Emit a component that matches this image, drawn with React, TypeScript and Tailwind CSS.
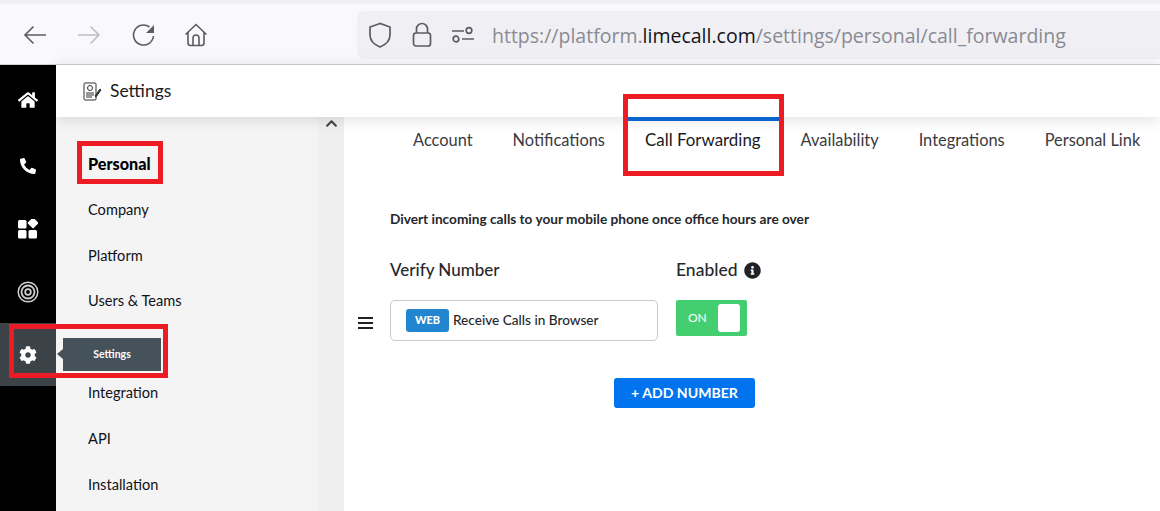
import { FaChevronUp, FaCog, FaHome, FaInfoCircle, FaPhoneAlt } from 'react-icons/fa';

const sideItems = ['Personal', 'Company', 'Platform', 'Users & Teams', '', 'Integration', 'API', 'Installation'];
const tabs = ['Account', 'Notifications', 'Call Forwarding', 'Availability', 'Integrations', 'Personal Link'];

function BrowserBar() {
  return (
    <div className="h-[65px] shrink-0 flex flex-col">
      <div className="h-1 shrink-0 bg-[#f0f0f2]" />
      <div className="flex-1 bg-[#f9f9fb] border-b border-[#cfcfd3] flex items-center">
        <div className="flex items-center pl-[23px] w-[357px] mt-[1px] text-[#5b5b66]">
          <svg width="24" height="24" viewBox="0 0 24 24" fill="none" stroke="currentColor" strokeWidth="1.6">
            <path d="M23 12H2M10.5 3.5 2 12l8.5 8.5" />
          </svg>
          <svg width="24" height="24" viewBox="0 0 24 24" fill="none" stroke="#bdbdc3" strokeWidth="1.6" className="ml-[30px]">
            <path d="M1 12h21M13.5 3.5 22 12l-8.5 8.5" />
          </svg>
          <svg width="24" height="24" viewBox="0 0 24 24" fill="none" stroke="currentColor" strokeWidth="1.6" className="ml-[31px]">
            <path d="M21.5 13a10 10 0 1 1-4-9" />
            <path d="M22 2v8h-8z" fill="currentColor" stroke="none" />
          </svg>
          <svg width="24" height="24" viewBox="0 0 24 24" fill="none" stroke="currentColor" strokeWidth="1.6" className="ml-[28px]">
            <path d="M1.5 11.5 12 1.5l10.5 10M4 9.5V20a2.5 2.5 0 0 0 2.5 2.5h11A2.5 2.5 0 0 0 20 20V9.5" />
            <path d="M9 22.5V15a3 3 0 0 1 6 0v7.5" />
          </svg>
        </div>
        <div className="flex-1 h-12 mt-[1px] bg-[#f0f0f4] rounded-l-lg flex items-center pl-[11px] text-[#5b5b66]">
          <svg width="24" height="26" viewBox="0 0 24 26" fill="none" stroke="currentColor" strokeWidth="1.7">
            <path d="M12 1.5 2 5v8c0 6 5 10 10 12 5-2 10-6 10-12V5z" />
          </svg>
          <svg width="20" height="26" viewBox="0 0 20 26" fill="none" stroke="currentColor" strokeWidth="1.7" className="ml-[20px]">
            <rect x="1.5" y="11" width="17" height="13" rx="2.5" />
            <path d="M4.5 11V7a5.5 5.5 0 0 1 11 0v4" />
          </svg>
          <svg width="22" height="18" viewBox="0 0 22 18" fill="none" stroke="currentColor" strokeWidth="1.7" className="ml-[20px]">
            <path d="M0 5h12M10 13h12" />
            <circle cx="17" cy="4.5" r="2.8" />
            <circle cx="4" cy="13" r="2.8" />
          </svg>
          <div className="ml-[18px] mt-[2px] text-[19.5px] font-['Open_Sans',sans-serif] text-[#8a8a92] whitespace-nowrap">
            https://platform.<span className="text-[#15141a]">limecall.com</span>/settings/personal/call_forwarding
          </div>
        </div>
      </div>
    </div>
  );
}

function Rail() {
  return (
    <div className="w-14 shrink-0 bg-black flex flex-col text-white">
      <div className="h-[70px] flex items-center justify-center">
        <FaHome className="text-[20px]" />
      </div>
      <div className="h-[62px] flex items-center justify-center">
        <FaPhoneAlt className="text-[16px]" />
      </div>
      <div className="h-[64px] flex items-center justify-center">
        <svg width="20" height="20" viewBox="0 0 20 20" fill="currentColor">
          <rect x="0" y="1" width="8.5" height="8.5" rx="1.5" />
          <rect x="0" y="11" width="8.5" height="8.5" rx="1.5" />
          <rect x="10.5" y="11" width="8.5" height="8.5" rx="1.5" />
          <rect x="11" y="0" width="8" height="8" rx="1" transform="rotate(45 15 4)" />
        </svg>
      </div>
      <div className="h-[62px] flex items-center justify-center">
        <svg width="22" height="22" viewBox="0 0 22 22" fill="none" stroke="#cfcfcf" strokeWidth="1.5">
          <circle cx="11" cy="11" r="9.8" />
          <circle cx="11" cy="11" r="6.5" strokeWidth="1.8" />
          <circle cx="11" cy="11" r="2.8" strokeWidth="1.8" />
        </svg>
      </div>
      <div className="h-[63px] bg-[#3b4248] flex items-center justify-center">
        <FaCog className="text-[18px]" />
      </div>
    </div>
  );
}

function Sidebar() {
  return (
    <div className="w-[262px] shrink-0 bg-[#f4f4f4] pt-[24px] pl-[32px] font-['Lato',sans-serif] text-[14.6px] text-[#10121a]">
      {sideItems.map((item) => (
        <div
          key={item || 'blank'}
          className={`h-[45.8px] flex items-center whitespace-nowrap ${item === 'Personal' ? 'font-black text-[16.2px] text-black' : ''}`}
        >
          {item}
        </div>
      ))}
    </div>
  );
}

function Tabs() {
  return (
    <div className="h-[46px] flex pl-[49px] font-['Lato',sans-serif] text-[16.4px] text-[#3a3a3f]">
      {tabs.map((tab) => (
        <div
          key={tab}
          className={`px-5 h-full flex items-center whitespace-nowrap ${tab === 'Call Forwarding' ? 'border-t-[4px] border-[#0b6bdc] text-[#1b1b1f] text-[16.9px] pb-[4px]' : ''}`}
        >
          {tab}
        </div>
      ))}
    </div>
  );
}

function Forwarding() {
  return (
    <div className="pl-[46px] pt-[48px] font-['Lato',sans-serif] text-[#25272c]">
      <div className="text-[13.65px] font-bold leading-[16px]">Divert incoming calls to your mobile phone once office hours are over</div>
      <div className="flex mt-[32px] text-[17px] leading-[22px] font-medium">
        <div className="w-[286px]">Verify Number</div>
        <div className="flex items-center gap-[6px] text-[17.5px]">
          Enabled <FaInfoCircle className="text-[17px] text-[#202226]" />
        </div>
      </div>
      <div className="flex items-center mt-[19px] relative">
        <div className="absolute left-[-32px] top-[17px] flex flex-col gap-[3px]">
          <span className="block w-[15px] h-[2px] bg-[#222]" />
          <span className="block w-[15px] h-[2px] bg-[#222]" />
          <span className="block w-[15px] h-[2px] bg-[#222]" />
        </div>
        <div className="w-[268px] h-[41px] border border-[#c9c9c9] rounded-[5px] flex items-center pl-[15px] text-[13.6px] font-medium">
          <span className="w-[43px] h-[23px] bg-[#2185d0] rounded-[3px] text-white text-[11px] font-black flex items-center justify-center mr-[4px]">WEB</span>
          Receive Calls in Browser
        </div>
        <div className="ml-[18px] mb-[5px] w-[71px] h-9 bg-[#45ce6f] rounded-[2px] flex items-center justify-between pl-[12px] pr-[7px] text-white text-[12px] font-normal">
          ON
          <span className="w-[22px] h-7 bg-white rounded-[3px]" />
        </div>
      </div>
      <div className="pl-[224px] mt-[37px]">
        <button className="w-[141px] h-[30px] bg-[#0073ee] rounded-[3px] text-white text-[14.1px] font-bold">+ ADD NUMBER</button>
      </div>
    </div>
  );
}

export default function App() {
  return (
    <div className="w-[1160px] h-[511px] overflow-hidden relative flex flex-col bg-white">
      <BrowserBar />
      <div className="flex flex-1 min-h-0">
        <Rail />
        <div className="flex-1 flex flex-col min-w-0">
          <div className="h-[52px] shrink-0 bg-white flex items-center pl-[27px] gap-[8px] font-['Lato',sans-serif] text-[17.5px] text-[#1b1b1f] shadow-[0_2px_14px_rgba(0,0,0,0.13)] relative z-10">
            <svg width="19" height="19" viewBox="0 0 19 19" fill="none" stroke="#333" strokeWidth="1">
              <rect x="1" y="1" width="12" height="17" rx="1" />
              <circle cx="7" cy="6" r="2.5" />
              <path d="M3 11h8M3 13h8M3 15h6" />
              <path d="m12 14 5-7 1 1-5 7z" fill="#333" />
            </svg>
            Settings
          </div>
          <div className="flex flex-1 min-h-0">
            <Sidebar />
            <div className="w-[26px] shrink-0 bg-[#efefef] flex justify-center text-[#444]">
              <FaChevronUp className="text-[13px]" />
            </div>
            <div className="flex-1 min-w-0">
              <Tabs />
              <Forwarding />
            </div>
          </div>
        </div>
      </div>

      {/* tooltip over the sidebar */}
      <div className="absolute left-[63px] top-[338px] w-[98px] h-[33px] bg-[#46525a] flex items-center justify-center text-white text-[10.5px] font-bold font-['Lato',sans-serif]">
        Settings
      </div>
      <div className="absolute left-[57px] top-[349px] w-0 h-0 border-y-[5px] border-y-transparent border-r-[6px] border-r-[#46525a]" />

      {/* red annotation boxes */}
      <div className="absolute z-20 left-[77px] top-[141px] w-[86px] h-[43px] border-[5px] border-[#ed1c24]" />
      <div className="absolute z-20 left-[623px] top-[94px] w-[161px] h-[82px] border-[5px] border-[#ed1c24]" />
      <div className="absolute z-20 left-[9px] top-[324px] w-[159px] h-[54px] border-[5px] border-[#ed1c24]" />
    </div>
  );
}
